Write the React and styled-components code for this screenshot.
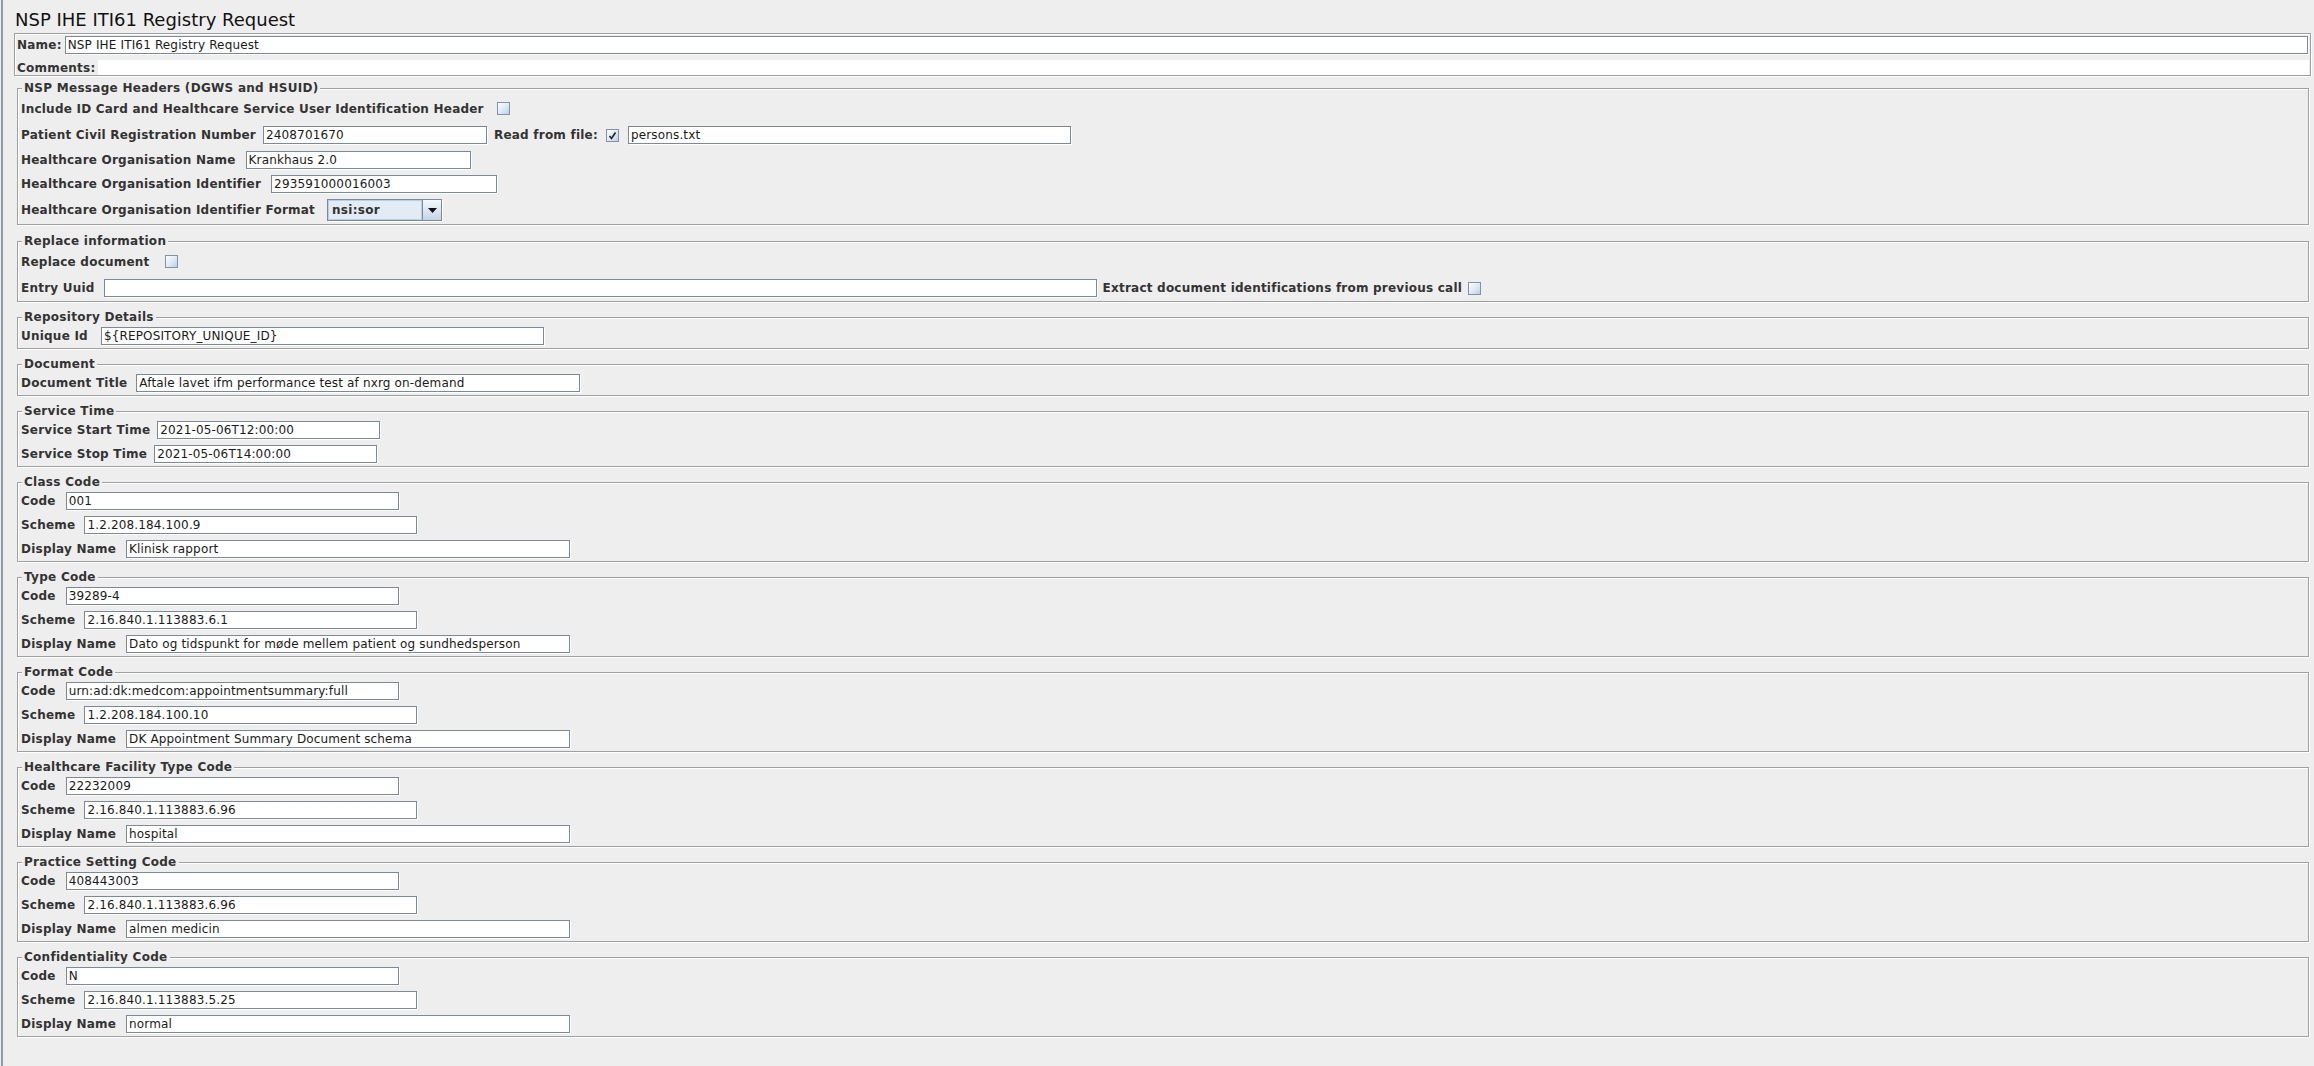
import React from 'react';
import styled, { createGlobalStyle } from 'styled-components';

const GlobalStyle = createGlobalStyle`
  html, body {
    margin: 0;
    padding: 0;
    background: #eeeeee;
  }
  body {
    font-family: "DejaVu Sans", "Liberation Sans", sans-serif;
  }
`;

const codeGroups = [
    { title: 'Class Code', code: '001', scheme: '1.2.208.184.100.9', display: 'Klinisk rapport' },
    { title: 'Type Code', code: '39289-4', scheme: '2.16.840.1.113883.6.1', display: 'Dato og tidspunkt for møde mellem patient og sundhedsperson' },
    { title: 'Format Code', code: 'urn:ad:dk:medcom:appointmentsummary:full', scheme: '1.2.208.184.100.10', display: 'DK Appointment Summary Document schema' },
    { title: 'Healthcare Facility Type Code', code: '22232009', scheme: '2.16.840.1.113883.6.96', display: 'hospital' },
    { title: 'Practice Setting Code', code: '408443003', scheme: '2.16.840.1.113883.6.96', display: 'almen medicin' },
    { title: 'Confidentiality Code', code: 'N', scheme: '2.16.840.1.113883.5.25', display: 'normal' },
];

function CheckBox({ checked, ml }) {
    return (
        <Check $ml={ml}>
            {checked && (
                <svg width="9" height="9" viewBox="0 0 9 9">
                    <path d="M1.5 5 L3.5 7.5 L7.5 1.5" fill="none" stroke="#222" strokeWidth="1.6" />
                </svg>
            )}
        </Check>
    );
}

function CodeGroup({ group }) {
    return (
        <Group>
            <Legend>{group.title}</Legend>
            <Rows>
                <Row>
                    <Label>Code</Label>
                    <Field $w={333} $ml={10}>{group.code}</Field>
                </Row>
                <Row>
                    <Label>Scheme</Label>
                    <Field $w={333} $ml={9}>{group.scheme}</Field>
                </Row>
                <Row>
                    <Label>Display Name</Label>
                    <Field $w={444} $ml={10}>{group.display}</Field>
                </Row>
            </Rows>
        </Group>
    );
}

function App() {
    return (
        <Page>
            <GlobalStyle />
            <Title>NSP IHE ITI61 Registry Request</Title>

            <NamePanel>
                <NameRow>
                    <Label>Name:</Label>
                    <Field $grow $ml={3}>NSP IHE ITI61 Registry Request</Field>
                </NameRow>
                <CommentsRow>
                    <Label>Comments:</Label>
                    <CommentsArea />
                </CommentsRow>
            </NamePanel>

            <Groups>
                <Group>
                    <Legend>NSP Message Headers (DGWS and HSUID)</Legend>
                    <Rows>
                        <Row $h={21}>
                            <Label>Include ID Card and Healthcare Service User Identification Header</Label>
                            <CheckBox ml={13} />
                        </Row>
                        <Row $h={20}>
                            <Label>Patient Civil Registration Number</Label>
                            <Field $w={224} $ml={7}>2408701670</Field>
                            <Label $ml={7}>Read from file:</Label>
                            <CheckBox checked ml={8} />
                            <Field $w={443} $ml={9}>persons.txt</Field>
                        </Row>
                        <Row>
                            <Label>Healthcare Organisation Name</Label>
                            <Field $w={225}>Krankhaus 2.0</Field>
                        </Row>
                        <Row>
                            <Label>Healthcare Organisation Identifier</Label>
                            <Field $w={226}>293591000016003</Field>
                        </Row>
                        <Row $h={22}>
                            <Label>Healthcare Organisation Identifier Format</Label>
                            <Combo>
                                <ComboValue>nsi:sor</ComboValue>
                                <ComboArrow>
                                    <svg width="9" height="5" viewBox="0 0 9 5">
                                        <polygon points="0,0 9,0 4.5,5" fill="#111" />
                                    </svg>
                                </ComboArrow>
                            </Combo>
                        </Row>
                    </Rows>
                </Group>

                <Group $mt={1}>
                    <Legend>Replace information</Legend>
                    <Rows>
                        <Row $h={21}>
                            <Label>Replace document</Label>
                            <CheckBox ml={15} />
                        </Row>
                        <Row $h={20}>
                            <Label>Entry Uuid</Label>
                            <Field $w={993} $ml={9} />
                            <Label $ml={6}>Extract document identifications from previous call</Label>
                            <CheckBox ml={6} />
                        </Row>
                    </Rows>
                </Group>

                <Group>
                    <Legend>Repository Details</Legend>
                    <Rows>
                        <Row>
                            <Label>Unique Id</Label>
                            <Field $w={443} $ml={13}>{'${REPOSITORY_UNIQUE_ID}'}</Field>
                        </Row>
                    </Rows>
                </Group>

                <Group>
                    <Legend>Document</Legend>
                    <Rows>
                        <Row>
                            <Label>Document Title</Label>
                            <Field $w={444} $ml={9}>Aftale lavet ifm performance test af nxrg on-demand</Field>
                        </Row>
                    </Rows>
                </Group>

                <Group>
                    <Legend>Service Time</Legend>
                    <Rows>
                        <Row>
                            <Label>Service Start Time</Label>
                            <Field $w={223} $ml={7}>2021-05-06T12:00:00</Field>
                        </Row>
                        <Row>
                            <Label>Service Stop Time</Label>
                            <Field $w={223} $ml={7}>2021-05-06T14:00:00</Field>
                        </Row>
                    </Rows>
                </Group>

                {codeGroups.map(g => (
                    <CodeGroup key={g.title} group={g} />
                ))}
            </Groups>
        </Page>
    );
}

export default App;

const Page = styled.div`
    box-sizing: border-box;
    min-height: 100vh;
    margin-left: 1px;
    border-left: 2px solid #8f9aa5;
    padding: 9px 3px 0 11px;
    display: flex;
    flex-direction: column;
`;

const Title = styled.div`
    margin: 0 0 3px 1px;
    font-family: "DejaVu Sans", sans-serif;
    font-size: 18px;
    line-height: 21px;
    color: #111;
`;

const Label = styled.span`
    margin-left: ${props => props.$ml || 0}px;
    font-family: "DejaVu Sans", sans-serif;
    font-weight: bold;
    font-size: 12px;
    line-height: 14px;
    letter-spacing: 0.22px;
    color: #333;
    white-space: nowrap;
`;

const NamePanel = styled.div`
    border: 1px solid #a0a0a0;
    box-shadow: inset 1px 1px 0 #fff, 1px 1px 0 #fff;
    padding: 2px 2px 0 2px;
    display: flex;
    flex-direction: column;
`;

const NameRow = styled.div`
    display: flex;
    align-items: center;
    height: 18px;
`;

const CommentsRow = styled.div`
    display: flex;
    align-items: center;
    height: 15px;
    margin-top: 6px;
    margin-right: -1px;
`;

const CommentsArea = styled.div`
    flex: 1;
    height: 15px;
    margin-left: 3px;
    background: #fff;
`;

const Field = styled.div`
    box-sizing: border-box;
    flex: ${props => (props.$grow ? 1 : 'none')};
    width: ${props => (props.$w ? `${props.$w}px` : 'auto')};
    height: 18px;
    margin-left: ${props => (props.$ml !== undefined ? props.$ml : 10)}px;
    padding: 0 2px;
    background: #fff;
    border: 1px solid #7a8a99;
    box-shadow: 1px 1px 0 #fff;
    font-family: "DejaVu Sans", sans-serif;
    font-size: 12px;
    line-height: 16px;
    letter-spacing: 0.15px;
    color: #1a1a1a;
    white-space: nowrap;
    overflow: hidden;
`;

const Check = styled.span`
    box-sizing: border-box;
    flex: none;
    width: 13px;
    height: 13px;
    margin-left: ${props => props.$ml || 10}px;
    border: 1px solid #8393a6;
    background: linear-gradient(135deg, #fdfeff 0%, #dde8f3 55%, #bccfe4 100%);
    display: inline-flex;
    align-items: center;
    justify-content: center;
`;

const Groups = styled.div`
    margin: 5px 2px 0 3px;
    display: flex;
    flex-direction: column;
    gap: 8px;
`;

const Group = styled.fieldset`
    margin: ${props => props.$mt || 0}px 0 0 0;
    min-width: 0;
    padding: 3px 3px 3px 3px;
    border: 1px solid #a0a0a0;
    box-shadow: inset 1px 1px 0 #fff, 1px 1px 0 #fff;
`;

const Legend = styled.legend`
    margin-left: 1px;
    padding: 0 2px;
    font-family: "DejaVu Sans", sans-serif;
    font-weight: bold;
    font-size: 12px;
    line-height: 14px;
    letter-spacing: 0.28px;
    color: #333;
    background: #eeeeee;
`;

const Rows = styled.div`
    display: flex;
    flex-direction: column;
    gap: 6px;
`;

const Row = styled.div`
    display: flex;
    align-items: center;
    height: ${props => props.$h || 18}px;
`;

const Combo = styled.div`
    box-sizing: border-box;
    display: flex;
    width: 115px;
    height: 22px;
    margin-left: 12px;
    border: 1px solid #7a8a99;
    box-shadow: 1px 1px 0 #fff;
`;

const ComboValue = styled.div`
    flex: 1;
    display: flex;
    align-items: center;
    padding-left: 3px;
    border: 1px solid #b8cfe5;
    background: #e3ebf4;
    font-family: "DejaVu Sans", sans-serif;
    font-weight: bold;
    font-size: 12px;
    letter-spacing: 0.28px;
    color: #333;
`;

const ComboArrow = styled.div`
    width: 18px;
    display: flex;
    align-items: center;
    justify-content: center;
    border-left: 1px solid #7a8a99;
    background: linear-gradient(#f5f8fb, #c4d5e8);
`;
